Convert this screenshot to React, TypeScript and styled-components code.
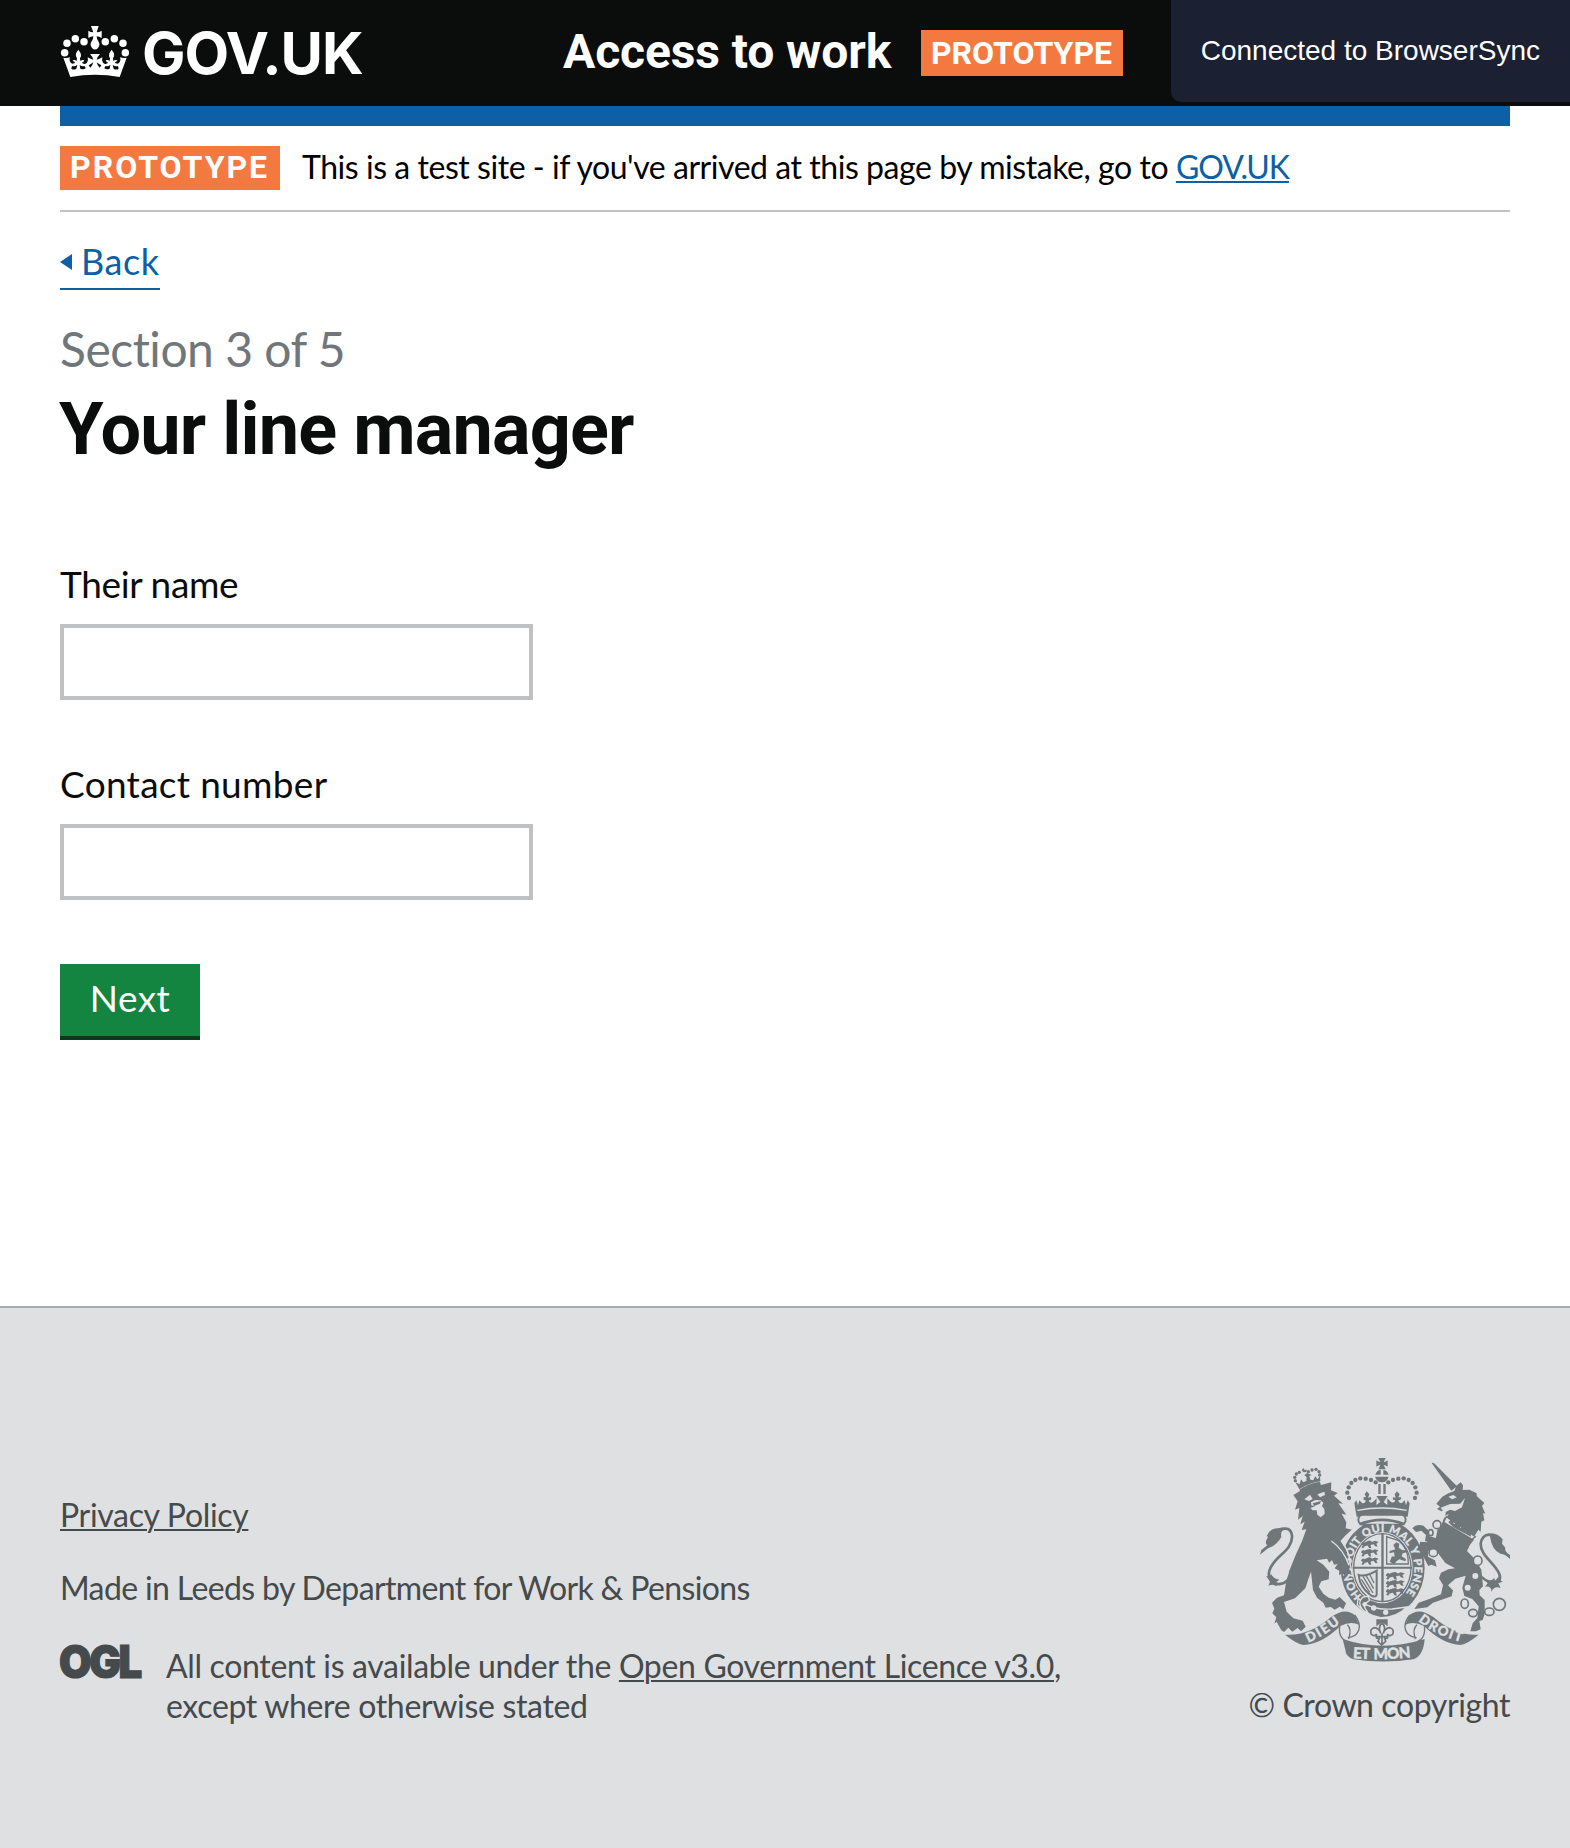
import React from "react";
import styled, { createGlobalStyle } from "styled-components";

const c = {
  black: "#0b0c0c",
  blue: "#0d60a5",
  orange: "#f47941",
  grey: "#6f777b",
  border: "#bfc1c3",
  footer: "#dfe0e2",
  footerText: "#454a4c",
  green: "#148441",
};

const bodyFont = `Lato, "Noto Sans", sans-serif`;
const boldFont = `Roboto, "Noto Sans", sans-serif`;

const GlobalStyle = createGlobalStyle`
  *, *::before, *::after { box-sizing: border-box; }
  body {
    margin: 0;
    background: #fff;
    color: ${c.black};
    font-family: ${bodyFont};
  }
  h1, p { margin: 0; }
`;

const Page = styled.div`
  display: flex;
  flex-direction: column;
  min-height: 1848px;
`;

const Header = styled.header`
  display: flex;
  align-items: flex-start;
  height: 106px;
  padding: 0 60px;
  background: ${c.black};
  color: #fff;
  font-family: ${boldFont};
`;

const Logo = styled.a`
  display: flex;
  gap: 12px;
  width: 503px;
  padding-top: 24px;
  color: #fff;
`;

const LogoText = styled.span`
  margin-top: -1px;
  font-family: Inter, sans-serif;
  font-size: 58px;
  font-weight: 700;
  line-height: 60px;
  letter-spacing: -1.1px;
`;

const ServiceName = styled.div`
  width: 358px;
  padding-top: 27px;
  font-size: 48px;
  font-weight: 700;
  line-height: 50px;
  letter-spacing: -0.1px;
  white-space: nowrap;
`;

const HeaderTag = styled.strong`
  width: 202px;
  height: 46px;
  margin-top: 30px;
  padding-right: 1px;
  background: ${c.orange};
  font-size: 32px;
  line-height: 46px;
  text-align: center;
`;

const SyncNotice = styled.div`
  position: absolute;
  top: 0;
  right: 0;
  width: 399px;
  height: 102px;
  padding-right: 30px;
  border-bottom-left-radius: 10px;
  background: #1b2032;
  color: #fff;
  font: 28px/101px "Liberation Sans", Arial, sans-serif;
  text-align: right;
  white-space: nowrap;
`;

const Main = styled.main`
  display: flex;
  flex: 1;
  flex-direction: column;
  align-items: flex-start;
  padding: 0 60px;
`;

const BlueBar = styled.div`
  align-self: stretch;
  height: 20px;
  background: ${c.blue};
`;

const PhaseBanner = styled.div`
  display: flex;
  align-self: stretch;
  align-items: flex-start;
  gap: 22px;
  height: 86px;
  padding-top: 20px;
  border-bottom: 2px solid ${c.border};
  color: #000;
  font-size: 32px;
  line-height: 41px;
`;

const PhaseTag = styled.strong`
  width: 220px;
  height: 44px;
  padding-left: 10px;
  background: ${c.orange};
  color: #fff;
  font-family: ${boldFont};
  line-height: 43px;
  letter-spacing: 2px;
`;

const PhaseText = styled.span`
  letter-spacing: -0.45px;
  white-space: nowrap;
`;

const Link = styled.a<{ $color?: string; $track?: number }>`
  color: ${(p) => p.$color ?? c.blue};
  letter-spacing: ${(p) => p.$track ?? 0}px;
  text-decoration: underline;
  text-decoration-thickness: 2px;
  text-underline-offset: 2px;
`;

const BackLink = styled.a`
  display: flex;
  gap: 9px;
  width: 100px;
  height: 50px;
  margin-top: 28px;
  border-bottom: 2px solid ${c.blue};
  color: ${c.blue};
  font-size: 36px;
  line-height: 43px;
  letter-spacing: 0.6px;
  text-decoration: none;

  &::before {
    content: "";
    margin-top: 14px;
    height: 0;
    border: solid transparent;
    border-width: 8px 12px 8px 0;
    border-right-color: ${c.blue};
  }
`;

const Caption = styled.p`
  margin-top: 29px;
  color: ${c.grey};
  font-size: 48px;
  line-height: 60px;
  letter-spacing: -0.5px;
`;

const Heading = styled.h1`
  margin: 11px 0 29px -1px;
  font-family: ${boldFont};
  font-size: 72px;
  font-weight: 700;
  line-height: 80px;
  letter-spacing: -0.85px;
`;

const Field = styled.label<{ $track: number }>`
  display: flex;
  flex-direction: column;
  gap: 15px;
  margin-top: 60px;
  font-size: 37px;
  line-height: 50px;
  letter-spacing: ${(p) => p.$track}px;

  & + & { margin-top: 59px; }
`;

const Input = styled.input`
  width: 473px;
  height: 76px;
  padding: 8px;
  border: 4px solid ${c.border};
  border-radius: 0;
  background: #fff;
  font: inherit;
`;

const Button = styled.button`
  width: 140px;
  height: 76px;
  margin-top: 64px;
  padding: 0 0 4px;
  border: 0;
  border-bottom: 4px solid #083a1b;
  background: ${c.green};
  color: #fff;
  font: 37px/60px ${bodyFont};
  letter-spacing: 0.4px;
`;

const Footer = styled.footer`
  display: flex;
  justify-content: space-between;
  height: 542px;
  padding: 0 60px;
  border-top: 2px solid #a1acb2;
  background: ${c.footer};
  color: ${c.footerText};
  font-size: 32px;
  line-height: 40px;
`;

const FooterMeta = styled.div`
  padding-top: 187px;
`;

const Credit = styled.p`
  margin: 33px 0 38px;
  letter-spacing: -0.63px;
`;

const Licence = styled.div`
  display: flex;
  align-items: flex-start;
  gap: 14px;
`;

const LicenceText = styled.p`
  letter-spacing: -0.33px;
  white-space: nowrap;
`;

const Copyright = styled.div`
  display: flex;
  flex-direction: column;
  align-items: flex-end;
  gap: 23px;
  padding-top: 150px;
  letter-spacing: -0.4px;
`;

const Ogl = styled.svg`
  width: 98px;
  height: 64px;
  margin: -17px 0 0 -6px;
`;

const Crown = () => (
  <svg width="70" height="62" viewBox="60 72 210 186" fill="#fff">
    {[[74, 158], [81, 130], [106, 116], [132, 125], [196, 125], [223, 116], [249, 130], [256, 158]].map(([x, y]) => (
      <circle key={x} cx={x} cy={y} r="11.2" />
    ))}
    <path d="M153 78H176L170 97Q178 97 185 92V114Q178 109 170 109Q170 116 175 124Q182 134 174 144Q165 153 156 144Q148 134 155 124Q160 116 160 109Q152 109 145 114V92Q152 97 160 97Z" />
    <path d="M70 173Q80 176 90 172Q86 183 94 190Q102 193 106 186Q100 187 98 181Q105 178 110 183L111 175Q106 168 108 160L115 149L122 160Q125 168 120 175L121 183Q127 178 133 181Q131 188 125 187Q132 196 141 188Q146 183 143 172Q152 178 160 179Q157 169 150 162H180Q173 169 170 179Q178 178 187 172Q184 183 189 188Q198 196 205 187Q199 188 197 181Q203 178 209 183L210 175Q205 168 208 160L215 149L222 160Q224 168 219 175L220 183Q225 178 232 181Q230 187 224 186Q228 193 236 190Q244 183 240 172Q250 176 260 173L239 231Q165 218 91 231Z" />
    <g fill="#0b0c0c">
      <path d="M96 198Q103 201 112 195L109 206Q102 211 94 206ZM134 198Q127 201 119 195L121 206Q130 210 137 205ZM196 198Q203 201 211 195L209 206Q200 210 193 205ZM234 198Q227 201 218 195L221 206Q228 211 236 206ZM146 196Q155 192 160 187Q158 197 151 203ZM184 196Q175 192 170 187Q172 197 179 203Z" />
    </g>
  </svg>
);

const OglMark = () => (
  <Ogl viewBox="-6 -16 98 64" fill={c.footerText} stroke={c.footerText} strokeWidth="1.2">
    <text x="-1" y="32.6" fontFamily="Inter, sans-serif" fontWeight="900" fontSize="45" textLength="81" lengthAdjust="spacingAndGlyphs" letterSpacing="-2.5">
      OGL
    </text>
  </Ogl>
);

const archDots = [
  [327, 174], [322, 158], [326, 142], [334, 129], [346, 120], [361, 115], [377, 116], [393, 120], [407, 127],
];
const lionPassant = "M0 10q5-9 9-4l8-3q9-4 13 2l8-3 10 3-6 4 3 7-6-1-5-5-8 2 2 8-6-1-4-6-8 2-4 5-5-2 4-5z";

const RoyalArms = () => (
  <svg width="250" height="204" viewBox="60 54 750 612" fill={c.grey}>
    <defs>
      <path id="garter" d="M368 470A95 110 0 1 1 488 470" />
      <path id="dieu" d="M205 608Q250 590 303 547" />
      <path id="droit" d="M534 543Q590 588 668 607" />
      <path id="motto" d="M330 654Q426 662 522 652" />
    </defs>

    {/* crown */}
    {archDots.map(([x, y], i) => (
      <React.Fragment key={i}>
        <circle cx={x} cy={y} r="6.5" />
        <circle cx={852 - x} cy={y} r="6.5" />
      </React.Fragment>
    ))}
    <path d="M415 54H437L431 66Q438 66 443 61V80Q437 75 431 75L437 88H415L421 75Q415 75 409 80V61Q414 66 421 66Z" />
    <path d="M406 104Q410 91 422 89V104ZM430 89Q443 92 446 104H430ZM405 110H446Q442 126 426 127Q410 126 405 110ZM415 132H422V162H415ZM430 132H437V162H430Z" />
    <path d="M343 190L349 181L354 196L358 181L367 190Q377 191 377 181Q369 182 371 172L378 171L374 163L380 154L388 163L384 173L393 171Q396 182 386 181Q389 193 400 185L410 175L409 195L421 186L409 168H443L431 186L442 195V175L452 185Q463 192 466 181Q456 181 459 172L467 173L464 163L471 154L479 163L475 172L483 172Q485 181 475 181Q476 191 486 189L494 181L498 196L503 181L509 190L503 230H350Z" />
    <path d="M352 211Q426 197 500 211" fill="none" stroke={c.footer} strokeWidth="4" />

    {/* garter and shield */}
    <ellipse cx="428" cy="385" rx="128" ry="149" fill={c.footer} />
    <ellipse cx="428" cy="384" rx="126" ry="145" />
    <rect x="355" y="224" width="142" height="30" rx="15" fill={c.footer} stroke={c.grey} strokeWidth="6" />
    <path d="M358 253Q426 226 494 253" fill="none" stroke={c.grey} strokeWidth="8" />
    <ellipse cx="427" cy="383" rx="91" ry="107" fill={c.footer} />
    <ellipse cx="427" cy="383" rx="86" ry="102" fill="none" stroke={c.grey} strokeWidth="4" />
    <path d="M424 280h7v205h-7zM338 380h178v6H338z" />
    <g>
      {[300, 325, 350].map((y) => <path key={y} d={lionPassant} transform={`translate(363 ${y}) scale(1.1 1.25)`} />)}
      {[394, 418, 442].map((y) => <path key={y} d={lionPassant} transform={`translate(437 ${y}) scale(1.2 1.25)`} />)}
    </g>
    <path d="M440 290V372H505Q506 324 476 302L440 290Z" fill="none" stroke={c.grey} strokeWidth="4" />
    <path d="M449 365l7-16 8 1-2-13-14 3 1-7 17-5-6-13 9-8 9 4-2 12 12 8 10-1 2 7-12 3-3 9 13 8-2 7-18-6-8 5-7 10z" />
    <path d="M356 405Q376 412 410 392V463Q409 473 396 468Q372 453 360 425Z" fill="none" stroke={c.grey} strokeWidth="6" />
    <path d="M369 409L399 459M379 408L401 446M390 405L402 429M364 418L389 457" stroke={c.grey} strokeWidth="4" />
    <text fill={c.footer} stroke={c.footer} strokeWidth="1" fontFamily="Lato, sans-serif" fontWeight="900" fontSize="33" wordSpacing="2">
      <textPath href="#garter" startOffset="4" textLength="492" lengthAdjust="spacing">HONI SOIT QUI MAL Y PENSE</textPath>
    </text>
    <path d="M354 474Q387 511 456 507L501 501Q468 534 422 533Q383 527 352 495Z" stroke={c.footer} strokeWidth="4" />
    <path d="M386 470Q362 466 359 489Q362 511 384 519L376 506Q367 493 388 482Z" stroke={c.footer} strokeWidth="4" />
    <g fill={c.footer}><circle cx="401" cy="504" r="8" /><circle cx="437" cy="517" r="8" /><circle cx="374" cy="493" r="7" /></g>

    {/* lion */}
    <path d="M160 165L184 151L240 136L274 127L273 151L293 159L282 167L309 191L295 190L319 224L305 221L319 247L317 265L337 269L318 286L303 302L322 338L322 372L335 405L326 402L315 412L310 400L297 405L298 392L284 385L293 372L282 374L276 360L268 368L261 356L230 361L250 374L268 395L266 418L244 424L236 440L250 461L266 473L286 479L299 471L318 490L310 508L299 500L284 509L273 501L257 503L250 488L231 473L219 450L213 395L204 420L196 445L165 475L132 486L140 515L160 535L188 542L197 560L183 574L173 564L157 575L145 563L132 576L124 571L110 545L103 551L109 532L97 520L103 506L96 488L111 473L132 466L139 422L151 385L167 345L186 304L199 268L185 270L194 245L181 253L188 228L174 239L178 204L165 209L173 184Z" />
    <path d="M337 270L318 288L304 303Q329 335 330 370L338 408L326 405" fill="none" stroke={c.footer} strokeWidth="4" />
    <path d="M274 303Q310 328 327 376" fill="none" stroke={c.footer} strokeWidth="4" />
    <g fill={c.footer}>
      <path d="M193 178L210 164L218 177L207 183ZM232 163L253 155L255 165L240 172Z" />
      <path d="M213 187L226 180L242 181L250 188L246 198L253 207L254 222L242 232L232 224L230 211L218 211L211 204L225 199L214 196Z" />
    </g>
    <path d="M218 190l25-7-3 8-18 7z" />
    <path d="M152 390C157 445 75 447 88 393C98 350 159 334 156 287C152 254 119 266 107 280" fill="none" stroke={c.grey} strokeWidth="8" />
    <path d="M60 344L64 330L82 316Q72 309 84 291L80 288Q91 263 114 265Q132 260 137 266Q120 270 124 291Q111 316 82 326ZM78 409Q91 410 93 402Q101 417 118 419Q104 425 111 439Q97 430 85 438L91 422Z" />
    <path d="M177 150L185 157L243 137L240 125Q206 129 177 150Z" />
    {[[166, 122], [164, 112], [169, 102], [178, 97], [205, 95], [216, 90], [228, 88], [237, 95], [239, 105]].map(([x, y]) => (
      <circle key={x} cx={x} cy={y} r="5" />
    ))}
    <path d="M166 126L178 148Q208 128 241 124L240 109L232 118L226 108L220 121L211 119L208 108L215 105L202 99L193 105L200 112L199 123L190 127L183 118L179 133ZM190 84L194 91L200 88L199 96L191 97L185 91Z" />

    {/* unicorn */}
    <path d="M575 69Q579 67 584 71L651 139L634 152Z" />
    <path d="M589 191L607 170L625 160L643 153L649 137L662 127L669 136L668 150L688 149L710 160L710 168L733 189L726 198L736 221L729 219L733 241L724 245L722 275L715 269L704 287L618 235L626 222L616 227L618 209L604 214L591 207L600 200Z" />
    <path d="M625 170L640 165L650 172L637 178ZM602 203L631 192L661 191L675 174L666 202L645 213L630 209L613 218Z" fill={c.footer} />
    <path d="M613 232L702 299L690 314L681 333L707 360L724 389L729 439L718 450L719 466L734 480V522L728 540L718 543L722 568L708 574H691L698 550L712 534L716 499L697 477L673 468L667 443L677 407L646 416L624 436L639 451L635 469L579 488L562 502L523 507L536 488L566 478L603 463L609 435L597 415L603 398L625 388L645 385L616 369L590 334L565 332L564 350L585 361L590 380L574 374L565 378L550 350L534 326L541 305L562 307L588 293L592 270L602 261Z" />
    <path d="M517 265Q530 251 550 257L570 275L566 288L587 294L572 310L555 303L558 285L544 272L528 276Z" />
    <path d="M619 230L706 290L696 298L611 247Z" fill={c.footer} stroke={c.grey} strokeWidth="4" />
    <path d="M625 246L638 235L641 253L655 245L661 265L674 257L677 274L692 270L693 290L640 262Z" />
    <path d="M715 400C738 434 791 438 778 402C765 369 721 347 722 311Q726 285 748 284" fill="none" stroke={c.grey} strokeWidth="8" />
    <path d="M743 281Q770 275 788 298L786 311L796 323Q792 333 810 345V357Q797 342 781 341Q756 330 750 290ZM735 420Q750 428 763 414L765 422L779 407Q777 420 788 425L775 430L782 444Q764 436 754 455Q755 438 735 440L743 430Z" />
    <g fill={c.footer} stroke={c.grey} strokeWidth="5">
      <ellipse cx="591" cy="254" rx="12" ry="12" /><ellipse cx="572" cy="278" rx="7" ry="9" />
      <ellipse cx="580" cy="338" rx="13" ry="12" /><ellipse cx="713" cy="362" rx="13" ry="14" />
      <ellipse cx="674" cy="491" rx="11" ry="14" /><ellipse cx="699" cy="519" rx="13" ry="11" />
    </g>
    <g fill="none" stroke={c.grey} strokeWidth="5"><ellipse cx="748" cy="515" rx="14" ry="11" /><circle cx="778" cy="493" r="18" /></g>
    <g fill={c.footer}><circle cx="706" cy="408" r="9" /><circle cx="683" cy="443" r="9" /></g>

    {/* scrolls */}
    <path d="M135 584Q206 589 273 531Q315 501 344 525L357 554Q332 543 301 558Q245 613 190 615Q169 611 135 584Z" />
    <path d="M716 584Q648 589 580 531Q538 501 509 525L496 554Q521 543 552 558Q608 613 662 615Q683 611 716 584Z" />
    <g fill="none" stroke={c.grey} strokeWidth="4">
      <path d="M344 525C371 560 356 590 323 593M299 558C294 589 312 602 320 604M322 554Q336 566 326 597" />
      <path d="M509 525C482 560 497 590 530 593M553 558C558 589 541 602 533 604M531 554Q516 566 526 597" />
    </g>
    <path d="M308 597Q426 637 554 597Q550 648 520 658Q430 671 340 658Q316 648 316 629Z" />
    <g fill={c.footer} stroke={c.footer} strokeWidth="1" fontFamily="Lato, sans-serif" fontWeight="900">
      <text fontSize="40"><textPath href="#dieu" textLength="112">DIEU</textPath></text>
      <text fontSize="40"><textPath href="#droit" textLength="144">DROIT</textPath></text>
      <text fontSize="46" wordSpacing="6"><textPath href="#motto" startOffset="8" textLength="174">ET MON</textPath></text>
    </g>
    <path d="M409 538H443V559L426 546L409 559Z" />
    <path d="M426 548Q413 561 422 580Q418 564 402 563Q388 568 394 583Q404 591 410 582Q404 598 418 595L414 604L425 615L437 604L434 595Q448 598 442 582Q448 591 458 583Q464 568 450 563Q434 564 430 580Q439 561 426 548ZM426 580V612M410 590H442" fill="none" stroke={c.grey} strokeWidth="5" />
  </svg>
);

export default function App() {
  return (
    <Page>
      <GlobalStyle />
      <Header>
        <Logo>
          <Crown />
          <LogoText>GOV.UK</LogoText>
        </Logo>
        <ServiceName>Access to work</ServiceName>
        <HeaderTag>PROTOTYPE</HeaderTag>
        <SyncNotice>Connected to BrowserSync</SyncNotice>
      </Header>
      <Main>
        <BlueBar />
        <PhaseBanner>
          <PhaseTag>PROTOTYPE</PhaseTag>
          <PhaseText>
            This is a test site - if you've arrived at this page by mistake, go to{" "}
            <Link $track={-1.05}>GOV.UK</Link>
          </PhaseText>
        </PhaseBanner>
        <BackLink>Back</BackLink>
        <Caption>Section 3 of 5</Caption>
        <Heading>Your line manager</Heading>
        <Field $track={-0.36}>
          Their name
          <Input type="text" />
        </Field>
        <Field $track={0.3}>
          Contact number
          <Input type="text" />
        </Field>
        <Button>Next</Button>
      </Main>
      <Footer>
        <FooterMeta>
          <Link $color={c.footerText} $track={-0.33}>Privacy Policy</Link>
          <Credit>Made in Leeds by Department for Work &amp; Pensions</Credit>
          <Licence>
            <OglMark />
            <LicenceText>
              All content is available under the{" "}
              <Link $color={c.footerText} $track={-0.33}>Open Government Licence v3.0</Link>,
              <br />
              except where otherwise stated
            </LicenceText>
          </Licence>
        </FooterMeta>
        <Copyright>
          <RoyalArms />
          <span>© Crown copyright</span>
        </Copyright>
      </Footer>
    </Page>
  );
}
